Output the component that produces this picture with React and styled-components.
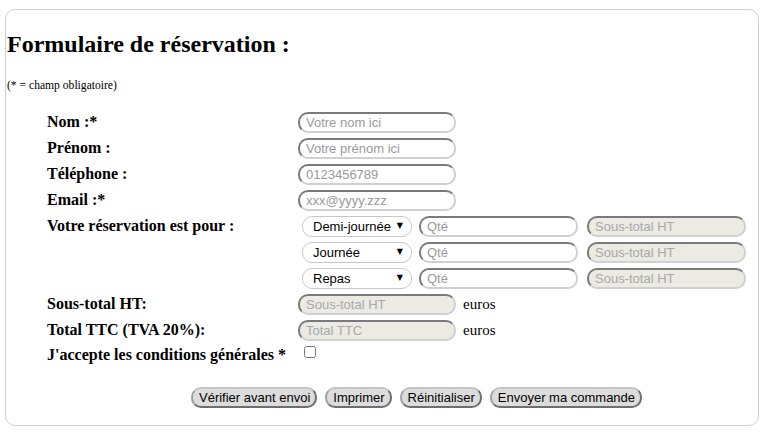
import React from 'react';
import styled, { createGlobalStyle } from 'styled-components';

const GlobalStyle = createGlobalStyle`
  html, body {
    margin: 0;
    padding: 0;
    background: #fff;
  }
  body {
    font-family: "Liberation Serif", "Times New Roman", serif;
    color: #000;
  }
`;

const Card = styled.section`
  margin: 9px 5px 0;
  border: 1px solid #cfcfcf;
  border-radius: 10px;
  padding: 0 1px 17px;
`;

const Title = styled.h2`
  margin: 20px 0 0;
  font-size: 24px;
  line-height: 28px;
  font-weight: bold;
`;

const Note = styled.p`
  margin: 21px 0 0;
  font-size: 11.6px;
  line-height: 14px;
`;

const Form = styled.form`
  margin: 16px 0 0 40px;
  display: flex;
  flex-direction: column;
`;

const Row = styled.div`
  display: grid;
  grid-template-columns: 251px auto;
  align-items: center;
  height: ${(p) => p.$h || 26}px;
`;

const Label = styled.label`
  font-size: 16px;
  font-weight: bold;
`;

const Field = styled.div`
  display: flex;
  align-items: center;
`;

const Input = styled.input`
  box-sizing: border-box;
  width: ${(p) => p.$w || 158}px;
  height: 21px;
  margin: 0;
  padding: 0 6px;
  border: 2px solid;
  border-color: #7a7a7a #d0d0d0 #d0d0d0 #7a7a7a;
  border-radius: 10px;
  background: ${(p) => (p.disabled ? '#ebebe4' : '#fff')};
  font-family: "Liberation Sans", Arial, sans-serif;
  font-size: 13px;
  outline: none;
  &::placeholder {
    color: ${(p) => (p.disabled ? '#a8a8a8' : '#9a9a9a')};
  }
`;

const SelectWrap = styled.div`
  position: relative;
  margin-left: 4px;
  margin-right: 7px;
`;

const Select = styled.select`
  appearance: none;
  box-sizing: border-box;
  width: 110px;
  height: 21px;
  margin: 0;
  padding: 0 0 0 10px;
  border: 1px solid #c8c8c8;
  border-radius: 10px;
  background: #fff;
  color: #000;
  font-family: "Liberation Sans", Arial, sans-serif;
  font-size: 13px;
`;

const Arrow = styled.span`
  position: absolute;
  right: 9px;
  top: 5px;
  font-family: "DejaVu Sans", sans-serif;
  font-size: 8px;
  line-height: 10px;
  color: #000;
  pointer-events: none;
`;

const Gap = styled.span`
  display: inline-block;
  width: ${(p) => p.$w}px;
`;

const Unit = styled.span`
  margin-left: 7px;
  font-size: 15px;
`;

const Check = styled.input`
  align-self: start;
  width: 12px;
  height: 12px;
  margin: 3px 0 0 6px;
`;

const Buttons = styled.div`
  display: flex;
  gap: 8px;
  margin-top: 20px;
  padding-left: 184px;
`;

const Button = styled.button`
  box-sizing: border-box;
  height: 21px;
  margin: 0;
  padding: 0 5px 0 6px;
  border: 2px solid;
  border-color: #c4c4c4 #6e6e6e #6e6e6e #a0a0a0;
  border-radius: 10px;
  background: #dcdcdc;
  color: #000;
  font-family: "Liberation Sans", Arial, sans-serif;
  font-size: 13px;
`;

const lines = [
  { id: 'demi', label: 'Demi-journée' },
  { id: 'jour', label: 'Journée' },
  { id: 'repas', label: 'Repas' },
];

const Line = ({ item }) => (
  <Field>
    <SelectWrap>
      <Select defaultValue={item.id}>
        <option value={item.id}>{item.label}</option>
      </Select>
      <Arrow>▼</Arrow>
    </SelectWrap>
    <Input $w={159} placeholder="Qté" />
    <Gap $w={9} />
    <Input $w={159} placeholder="Sous-total HT" disabled />
  </Field>
);

export default function App() {
  return (
    <>
      <GlobalStyle />
      <Card>
        <Title>Formulaire de réservation :</Title>
        <Note>(* = champ obligatoire)</Note>
        <Form onSubmit={(e) => e.preventDefault()}>
          <Row>
            <Label>Nom :*</Label>
            <Field><Input placeholder="Votre nom ici" /></Field>
          </Row>
          <Row>
            <Label>Prénom :</Label>
            <Field><Input placeholder="Votre prénom ici" /></Field>
          </Row>
          <Row>
            <Label>Téléphone :</Label>
            <Field><Input placeholder="0123456789" /></Field>
          </Row>
          <Row>
            <Label>Email :*</Label>
            <Field><Input placeholder="xxx@yyyy.zzz" /></Field>
          </Row>
          {lines.map((item, i) => (
            <Row key={item.id}>
              <Label>{i === 0 ? 'Votre réservation est pour :' : ''}</Label>
              <Line item={item} />
            </Row>
          ))}
          <Row>
            <Label>Sous-total HT:</Label>
            <Field>
              <Input placeholder="Sous-total HT" disabled />
              <Unit>euros</Unit>
            </Field>
          </Row>
          <Row>
            <Label>Total TTC (TVA 20%):</Label>
            <Field>
              <Input placeholder="Total TTC" disabled />
              <Unit>euros</Unit>
            </Field>
          </Row>
          <Row $h={24}>
            <Label>J'accepte les conditions générales *</Label>
            <Check type="checkbox" />
          </Row>
        </Form>
        <Buttons>
          <Button type="button">Vérifier avant envoi</Button>
          <Button type="button">Imprimer</Button>
          <Button type="reset">Réinitialiser</Button>
          <Button type="button">Envoyer ma commande</Button>
        </Buttons>
      </Card>
    </>
  );
}
